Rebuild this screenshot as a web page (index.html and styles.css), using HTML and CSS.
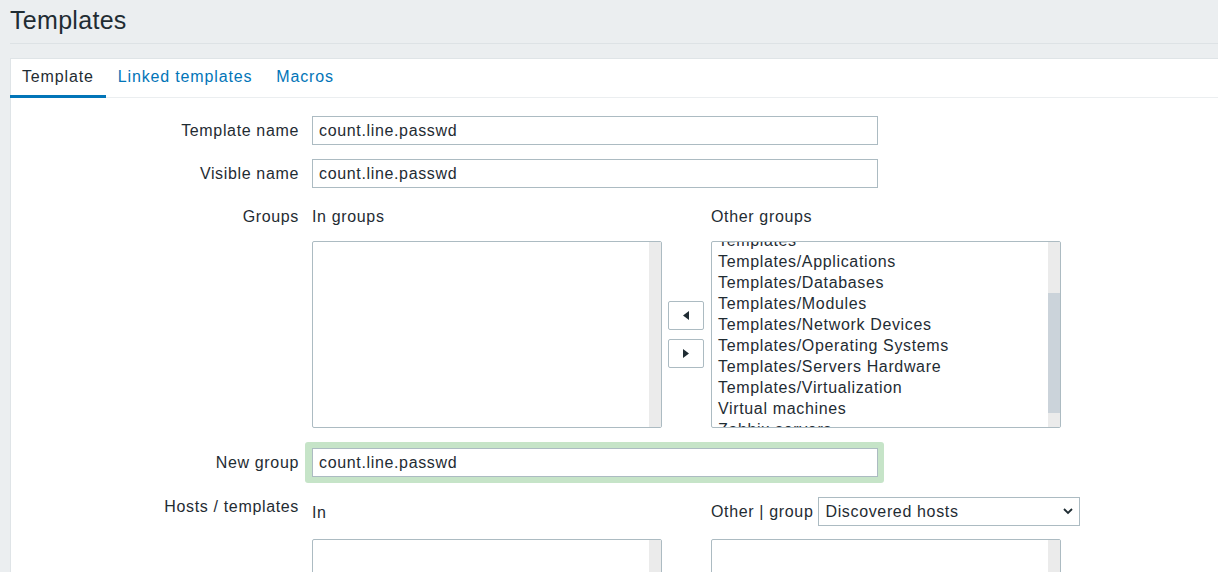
FILE: index.html
```html
<!DOCTYPE html>
<html lang="en">
<head>
<meta charset="utf-8">
<title>Templates</title>
<link rel="stylesheet" href="styles.css">
</head>
<body>
<header class="page-header">
  <h1 class="page-title">Templates</h1>
</header>
<main class="panel">
  <nav class="tabs">
    <span class="tab tab-active">Template</span>
    <a class="tab" href="#">Linked templates</a>
    <a class="tab" href="#">Macros</a>
  </nav>
  <div class="form">
    <div class="row">
      <div class="lbl">Template name</div>
      <div class="field"><div class="text-input">count.line.passwd</div></div>
    </div>
    <div class="row">
      <div class="lbl">Visible name</div>
      <div class="field"><div class="text-input">count.line.passwd</div></div>
    </div>
    <div class="row">
      <div class="lbl">Groups</div>
      <div class="twin">
        <div class="twin-head">In groups</div>
        <div class="twin-gap"></div>
        <div class="twin-head">Other groups</div>
        <div class="listbox">
          <div class="list-body"></div>
          <div class="track"></div>
        </div>
        <div class="move-btns">
          <button class="move-btn" type="button"><svg width="6" height="9" viewBox="0 0 6 9"><polygon points="6,0 6,9 0,4.5" fill="#1f2c33"/></svg></button>
          <button class="move-btn" type="button"><svg width="6" height="9" viewBox="0 0 6 9"><polygon points="0,0 0,9 6,4.5" fill="#1f2c33"/></svg></button>
        </div>
        <div class="listbox">
          <div class="list-body">
            <ul class="items scrolled">
              <li>Templates</li>
              <li>Templates/Applications</li>
              <li>Templates/Databases</li>
              <li>Templates/Modules</li>
              <li>Templates/Network Devices</li>
              <li>Templates/Operating Systems</li>
              <li>Templates/Servers Hardware</li>
              <li>Templates/Virtualization</li>
              <li>Virtual machines</li>
              <li>Zabbix servers</li>
            </ul>
          </div>
          <div class="track"><div class="thumb"></div></div>
        </div>
      </div>
    </div>
    <div class="row">
      <div class="lbl lbl-new">New group</div>
      <div class="field">
        <div class="new-group"><div class="text-input">count.line.passwd</div></div>
      </div>
    </div>
    <div class="row">
      <div class="lbl lbl-top">Hosts / templates</div>
      <div class="twin">
        <div class="twin-head twin-head-sel"><span class="in-label">In</span></div>
        <div class="twin-gap"></div>
        <div class="twin-head twin-head-sel">
          <span class="nowrap">Other | group</span>
          <div class="select">
            <span>Discovered hosts</span>
            <svg class="chev" width="10" height="7" viewBox="0 0 10 7"><polyline points="1,1 5,5 9,1" fill="none" stroke="#1f2c33" stroke-width="1.8"/></svg>
          </div>
        </div>
        <div class="listbox">
          <div class="list-body"></div>
          <div class="track"></div>
        </div>
        <div class="twin-gap"></div>
        <div class="listbox">
          <div class="list-body"></div>
          <div class="track"></div>
        </div>
      </div>
    </div>
  </div>
</main>
</body>
</html>
```

FILE: styles.css
```css
html, body {
  margin: 0;
  padding: 0;
}
body {
  background: #ebeef0;
  color: #1f2c33;
  font-family: "Liberation Sans", Arial, sans-serif;
  font-size: 16px;
  letter-spacing: 0.65px;
  width: 1218px;
  height: 572px;
  overflow: hidden;
}
.page-header {
  margin-left: 10px;
  height: 44px;
  border-bottom: 1px solid #dde2e5;
  box-sizing: border-box;
  margin-bottom: 14px;
}
.page-title {
  margin: 0;
  font-size: 25px;
  letter-spacing: 0.3px;
  font-weight: normal;
  line-height: 40px;
  color: #1f2c33;
}
.panel {
  margin-left: 10px;
  background: #ffffff;
  border: 1px solid #dfe4e7;
  border-right: none;
  height: 600px;
  box-sizing: border-box;
}
.tabs {
  display: flex;
  height: 39px;
  border-bottom: 1px solid #ebeef0;
  box-sizing: border-box;
  margin-left: -1px;
}
.tab {
  padding: 0 12px;
  line-height: 36px;
  letter-spacing: 0.85px;
  color: #0275b8;
  text-decoration: none;
  border-bottom: 3px solid transparent;
  margin-bottom: -1px;
}
.tab-active {
  color: #1f2c33;
  border-bottom-color: #0275b8;
}
.form {
  padding-top: 18px;
}
.row {
  display: grid;
  grid-template-columns: 288px 1fr;
  column-gap: 13px;
  margin-bottom: 14px;
}
.lbl {
  text-align: right;
  padding-top: 6px;
  line-height: 18px;
  white-space: nowrap;
}
.lbl-new {
  padding-top: 12px;
}
.lbl-top {
  padding-top: 1px;
}
.field {
  display: flex;
}
.text-input {
  width: 566px;
  height: 29px;
  box-sizing: border-box;
  border: 1px solid #acbbc2;
  background: #ffffff;
  padding: 0 6px;
  line-height: 27px;
}
.new-group {
  margin-left: -7px;
  padding: 6px 6px 6px 7px;
  background: #c6e4c8;
  border-radius: 3px;
}
.twin {
  display: grid;
  grid-template-columns: 350px 49px 350px;
}
.twin-head {
  height: 39px;
  box-sizing: border-box;
  padding-top: 6px;
  line-height: 18px;
  white-space: nowrap;
}
.twin-head-sel {
  height: 42px;
  padding-top: 0;
  padding-bottom: 13px;
  display: flex;
  align-items: center;
  gap: 5px;
}
.nowrap {
  white-space: nowrap;
}
.in-label {
  padding-top: 2px;
}
.listbox {
  height: 187px;
  border: 1px solid #acbbc2;
  border-radius: 2px;
  box-sizing: border-box;
  display: flex;
  overflow: hidden;
  background: #ffffff;
}
.list-body {
  flex: 1;
  overflow: hidden;
}
.track {
  width: 12px;
  background: #ebebeb;
  display: flex;
  flex-direction: column;
}
.thumb {
  margin-top: 51px;
  height: 120px;
  background: #cbd3da;
}
.items {
  list-style: none;
  margin: 0;
  padding: 0 0 0 6px;
  line-height: 21px;
  white-space: nowrap;
}
.scrolled {
  margin-top: -12px;
}
.move-btns {
  display: flex;
  flex-direction: column;
  justify-content: center;
  align-items: flex-start;
  gap: 9px;
  padding-left: 6px;
}
.move-btn {
  width: 36px;
  height: 29px;
  border: 1px solid #acbbc2;
  border-radius: 2px;
  background: #ffffff;
  padding: 0;
  display: flex;
  align-items: center;
  justify-content: center;
}
.select {
  flex-shrink: 0;
  width: 262px;
  height: 29px;
  box-sizing: border-box;
  border: 1px solid #acbbc2;
  background: #ffffff;
  padding: 0 6px;
  display: flex;
  align-items: center;
  justify-content: space-between;
  white-space: nowrap;
}
.chev {
  flex-shrink: 0;
}
```
